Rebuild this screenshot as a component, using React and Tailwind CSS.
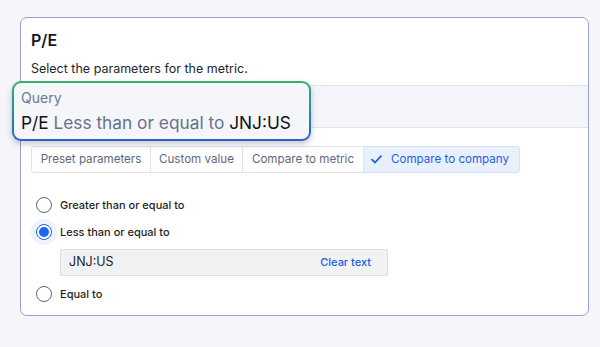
import React from "react";

const Radio = ({ checked, label }) => (
  <label className="flex items-center gap-2 h-4">
    {checked ? (
      <span className="relative flex items-center justify-center w-4 h-4">
        <span className="absolute -inset-[5px] rounded-full bg-[#eef3fe]"></span>
        <span className="relative w-4 h-4 rounded-full border border-[#1a66f0] bg-white flex items-center justify-center">
          <span className="w-[10px] h-[10px] rounded-full bg-[#1a66f0]"></span>
        </span>
      </span>
    ) : (
      <span className="w-4 h-4 rounded-full border border-[#5c6377] bg-white"></span>
    )}
    <span className="text-[11px] font-medium text-[#1d1f24]">{label}</span>
  </label>
);

const App = () => {
  const tabs = [
    { t: "Preset parameters", w: "w-[120px]" },
    { t: "Custom value", w: "w-[92px]" },
    { t: "Compare to metric", w: "w-[121px]" },
  ];

  return (
    <div
      className="w-[600px] h-[347px] bg-[#f5f5fa] pt-[17px] pl-[20px]"
      style={{ fontFamily: "Inter, 'Noto Sans', sans-serif" }}
    >
      <div className="relative w-[569px] h-[299px] bg-white border border-[#97a0d4] rounded-[7px]">
        {/* header */}
        <div className="px-[10px] pt-[12px]">
          <h2 className="text-[16px] leading-[20px] font-semibold text-[#16181d]">P/E</h2>
          <p className="mt-[11px] text-[12.5px] leading-[16px] text-[#23262d]">
            Select the parameters for the metric.
          </p>
        </div>

        {/* gray band */}
        <div className="mt-[8px] h-[43px] bg-[#f4f5fa] border-y border-[#e1e3ea]"></div>

        {/* segmented control */}
        <div className="mt-[18px] ml-[10px] flex h-[27px] w-fit text-[11.6px]">
          {tabs.map(({ t, w }, i) => (
            <div
              key={t}
              className={`${w} flex items-center justify-center border border-[#e0e3ea] text-[#5e6880] ${
                i === 0 ? "rounded-l-[3px]" : "border-l-0"
              }`}
            >
              {t}
            </div>
          ))}
          <div className="w-[156px] flex items-center gap-[9px] pl-[7px] bg-[#e8f0fe] border border-l-0 border-[#d8e1f3] rounded-r-[3px] text-[#1f5fe0]">
            <svg width="11" height="9" viewBox="0 0 11 9" fill="none">
              <path d="M1 4.6 L4 7.5 L10 1.2" stroke="#1f5fe0" strokeWidth="1.8" strokeLinecap="round" strokeLinejoin="round" />
            </svg>
            Compare to company
          </div>
        </div>

        {/* radios */}
        <div className="mt-[24px] pl-[15px] flex flex-col">
          <Radio label="Greater than or equal to" />
          <div className="mt-[11px]">
            <Radio checked label="Less than or equal to" />
          </div>
          <div className="mt-[9px] ml-[24px] w-[328px] h-[27px] flex items-center justify-between bg-[#f1f2f4] border border-[#dcdee3] rounded-[2px] pl-[8px] pr-[16px]">
            <span className="text-[12.5px] text-[#1d1f24]">JNJ:US</span>
            <span className="text-[11px] font-medium text-[#1a5ee8]">Clear text</span>
          </div>
          <div className="mt-[10px]">
            <Radio label="Equal to" />
          </div>
        </div>

        {/* query overlay */}
        <div className="absolute left-[-9px] top-[63px] w-[299px] h-[60px] p-[2px] rounded-[9px] bg-gradient-to-b from-[#3cae6a] to-[#2b5fd6] shadow-[0_3px_6px_rgba(0,0,0,0.22)]">
          <div className="w-full h-full rounded-[7px] bg-[#f5f6fa] pl-[7px] pt-[6px]">
            <div className="text-[14px] leading-[18px] text-[#6b7793]">Query</div>
            <div className="mt-[5px] text-[17.3px] leading-[22px] text-[#0f1115]">
              P/E <span className="text-[#65718e]">Less than or equal to</span> JNJ:US
            </div>
          </div>
        </div>
      </div>
    </div>
  );
};

export default App;
